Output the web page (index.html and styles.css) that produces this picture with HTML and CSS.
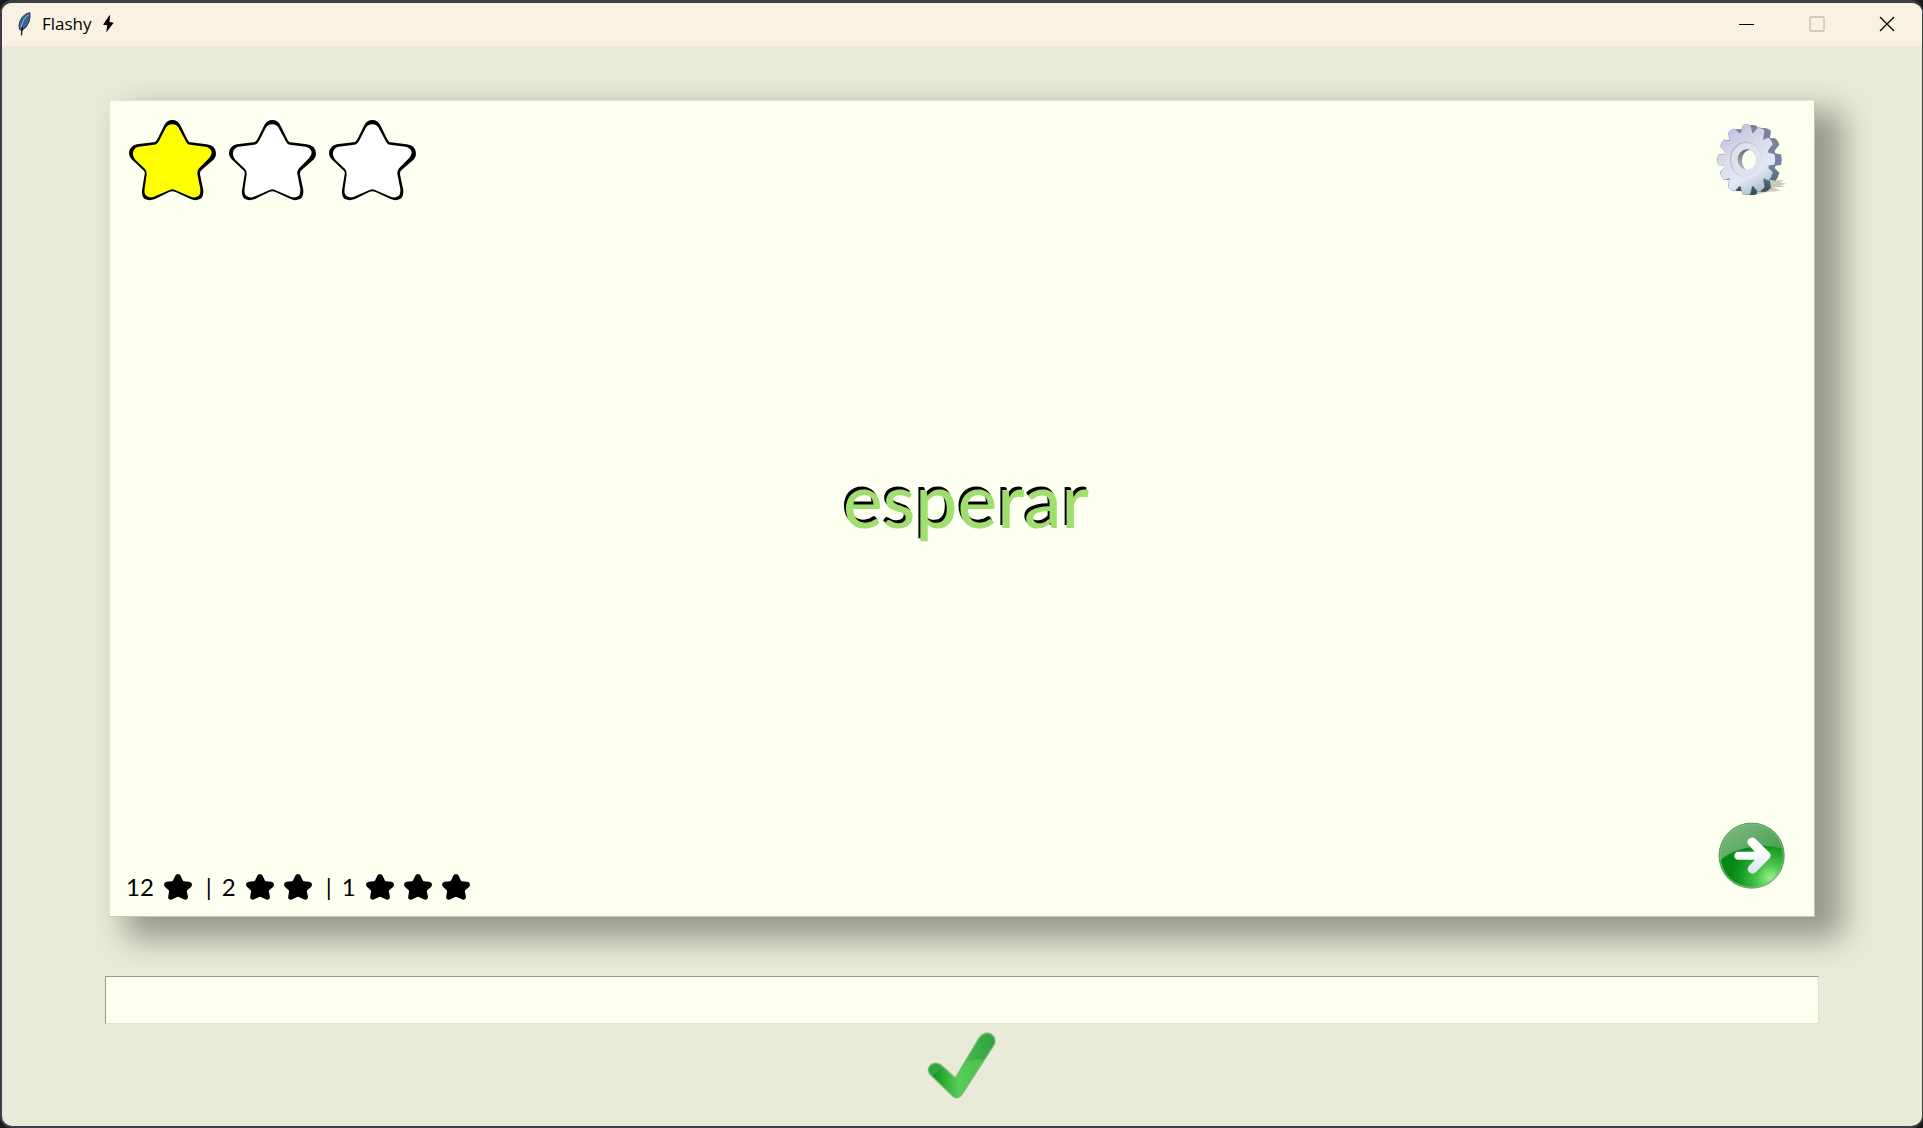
FILE: index.html
```html
<!DOCTYPE html>
<html lang="en">
<head>
<meta charset="utf-8">
<title>Flashy</title>
<link rel="stylesheet" href="styles.css">
</head>
<body>
<svg class="defs" aria-hidden="true">
  <symbol id="star-outline" viewBox="57 59 261 243">
    <path fill="#000" d="M187 59Q204 59 212 76L231 115Q236 126 242 126L290 132Q317 135 318 160Q318 172 306 182L274 210Q269 215 270 222L280 270Q281 290 270 296Q256 303 242 296L195 274Q187 271 179 274L135 296Q118 303 105 296Q94 289 96 270L104 222Q106 215 100 210L68 180Q57 170 57 158Q58 138 80 132L130 126Q137 126 143 115L162 76Q170 59 187 59Z"/>
    <path fill="currentColor" d="M187 72Q201 73 206 83L227 122Q232 133 240 133L286 139Q303 142 305 156Q305 166 297 174L267 204Q261 212 262 220L271 266Q272 281 266 287Q255 294 244 290L195 269Q187 265 179 269L130 290Q116 294 107 285Q102 279 104 264L110 222Q111 212 105 206L76 178Q67 168 69 156Q71 143 86 139L132 133Q141 133 147 122L167 83Q173 73 187 72Z"/>
  </symbol>
  <symbol id="star-solid" viewBox="57 59 261 243">
    <path d="M187 59Q204 59 212 76L231 115Q236 126 242 126L290 132Q317 135 318 160Q318 172 306 182L274 210Q269 215 270 222L280 270Q281 290 270 296Q256 303 242 296L195 274Q187 271 179 274L135 296Q118 303 105 296Q94 289 96 270L104 222Q106 215 100 210L68 180Q57 170 57 158Q58 138 80 132L130 126Q137 126 143 115L162 76Q170 59 187 59Z"/>
  </symbol>
</svg>
<div class="window">
  <header class="titlebar">
    <svg class="feather" viewBox="57 32 38 72" aria-hidden="true">
      <path d="M92 34Q74 36 63 58Q57 72 61 84L67 88Q84 80 90 60Q94 46 92 34Z" fill="#3b6595" stroke="#333a42" stroke-width="3"/>
      <path d="M88 40Q72 50 65 80" fill="none" stroke="#9dbbd6" stroke-width="3"/>
      <path d="M70 76Q68 86 67 102" fill="none" stroke="#111" stroke-width="4"/>
    </svg>
    <h1 class="title">Flashy</h1>
    <svg class="bolt" viewBox="308 45 34 54" aria-hidden="true">
      <path d="M328 45L308 74L321 76L318 98L341 68L328 66L330 46Z"/>
    </svg>
    <div class="controls">
      <button type="button" aria-label="Minimize"><svg viewBox="0 0 16 16"><path d="M0 8.500H15" stroke="#000"/></svg></button>
      <button type="button" aria-label="Maximize" disabled><svg viewBox="0 0 16 16"><rect x="1" y="1" width="14" height="14" rx="1" fill="none" stroke="#c4bdb1" stroke-width="1.300"/></svg></button>
      <button type="button" aria-label="Close"><svg viewBox="0 0 16 16"><path d="M1 1L15 15M15 1L1 15" stroke="#000" stroke-width="1.300"/></svg></button>
    </div>
  </header>
  <main class="content">
    <section class="card">
      <div class="card-top">
        <div class="rating" role="img" aria-label="1 of 3 stars">
          <svg class="filled"><use href="#star-outline"/></svg>
          <svg><use href="#star-outline"/></svg>
          <svg><use href="#star-outline"/></svg>
        </div>
        <button class="icon-button" type="button" aria-label="Settings">
          <svg viewBox="44 63 213 213">
            <defs>
              <linearGradient id="gear-face" x1="0" y1="0" x2=".5" y2="1"><stop offset="0" stop-color="#b8b3dd"/><stop offset=".45" stop-color="#d9dae8"/><stop offset=".8" stop-color="#e0eaf4"/><stop offset="1" stop-color="#b6c6d3"/></linearGradient>
              <linearGradient id="gear-ring" x1="0" y1="0" x2="1" y2="1"><stop offset="0" stop-color="#aaa8c4"/><stop offset="1" stop-color="#f4f6fb"/></linearGradient>
              <linearGradient id="gear-side" gradientUnits="userSpaceOnUse" x1="0" y1="64" x2="0" y2="272"><stop offset="0" stop-color="#84809b"/><stop offset=".6" stop-color="#70839a"/><stop offset="1" stop-color="#304c56"/></linearGradient>
              <linearGradient id="gear-hole" x1="0" y1="0" x2="0" y2="1"><stop offset="0" stop-color="#66646e"/><stop offset="1" stop-color="#c3c7cc"/></linearGradient>
              <clipPath id="gear-shape">
                <ellipse cx="138" cy="167" rx="69" ry="83"/>
                <path id="gear-teeth" d="M122 88L128 64Q138 60 150 65L156 88ZM158 88L173 71Q183 71 192 79L188 108ZM188 108L204 101Q214 109 217 121L200 143ZM200 146L222 150Q226 168 222 182L202 184ZM201 189L217 205Q214 218 206 229L188 222ZM188 224L192 250Q183 260 173 263L158 245ZM155 245L149 270Q138 274 127 270L121 245ZM118 245L103 261Q93 259 84 250L88 223ZM88 222L71 227Q62 217 60 204L77 187ZM76 184L54 182Q50 168 54 153L76 150ZM77 146L61 128Q62 117 71 108L89 112ZM88 109L85 86Q92 76 104 75L118 89Z"/>
              </clipPath>
              <clipPath id="hole-shape"><ellipse cx="140" cy="167" rx="28" ry="31"/></clipPath>
            </defs>
            <path d="M178 242Q210 226 252 229L238 236L260 239L240 244L254 249L218 250L242 260L200 264Q150 278 132 268Z" fill="#b9b8a8" opacity=".75"/>
            <g fill="url(#gear-side)">
              <g transform="translate(20 1)"><ellipse cx="138" cy="167" rx="69" ry="83"/><use href="#gear-teeth"/></g>
              <g transform="translate(15 1)"><ellipse cx="138" cy="167" rx="69" ry="83"/><use href="#gear-teeth"/></g>
              <g transform="translate(10 1)"><ellipse cx="138" cy="167" rx="69" ry="83"/><use href="#gear-teeth"/></g>
              <g transform="translate(5 0)"><ellipse cx="138" cy="167" rx="69" ry="83"/><use href="#gear-teeth"/></g>
            </g>
            <use href="#gear-teeth" fill="none" stroke="#8f93ad" stroke-width="3"/>
            <rect x="50" y="60" width="178" height="214" fill="url(#gear-face)" clip-path="url(#gear-shape)"/>
            <ellipse cx="138" cy="167" rx="47" ry="52" fill="#dfe1ee" stroke="url(#gear-ring)" stroke-width="4"/>
            <g clip-path="url(#hole-shape)">
              <rect x="108" y="130" width="64" height="72" fill="url(#gear-hole)"/>
              <ellipse cx="149" cy="169" rx="24" ry="31" fill="#fdfff0"/>
            </g>
          </svg>
        </button>
      </div>
      <p class="word" lang="es">esperar</p>
      <div class="card-bottom">
        <div class="stats">
          <span>12</span><svg><use href="#star-solid"/></svg>
          <span class="bar">|</span>
          <span>2</span><svg><use href="#star-solid"/></svg><svg><use href="#star-solid"/></svg>
          <span class="bar">|</span>
          <span>1</span><svg><use href="#star-solid"/></svg><svg><use href="#star-solid"/></svg><svg><use href="#star-solid"/></svg>
        </div>
        <button class="icon-button next" type="button" aria-label="Next card">
          <svg viewBox="54 50 204 204">
            <defs>
              <radialGradient id="ball" gradientUnits="userSpaceOnUse" cx="212" cy="218" r="120"><stop offset="0" stop-color="#96f48a"/><stop offset=".35" stop-color="#4bc34b"/><stop offset=".8" stop-color="#109622"/><stop offset="1" stop-color="#078716"/></radialGradient>
              <linearGradient id="gloss" x1="0" y1="0" x2="1" y2="1"><stop offset="0" stop-color="#8bb98d"/><stop offset="1" stop-color="#349d40"/></linearGradient>
              <linearGradient id="arrow" x1="0" y1="0" x2="0" y2="1"><stop offset=".4" stop-color="#fff"/><stop offset="1" stop-color="#d5e4f5"/></linearGradient>
            </defs>
            <circle cx="155" cy="151" r="98" fill="url(#ball)"/>
            <path d="M58 170A98 98 0 1 1 252 133Q205 113 150 126Q80 140 58 170Z" fill="url(#gloss)"/>
            <circle cx="155" cy="151" r="95" fill="none" stroke="#73c37b" stroke-width="3"/>
            <circle cx="155" cy="151" r="98" fill="none" stroke="#5d8b60" stroke-width="2"/>
            <path d="M115 139H164L146 119Q138 109 146 101Q156 92 166 100L210 144Q215 151 210 157L168 200Q158 209 148 201Q139 193 147 182L165 163H115Q103 162 103 151Q103 140 115 139Z" fill="url(#arrow)"/>
          </svg>
        </button>
      </div>
    </section>
    <form class="answer" onsubmit="return false">
      <input class="answer-box" type="text" aria-label="Translation" autocomplete="off">
      <button class="icon-button submit" type="submit" aria-label="Check answer">
        <svg viewBox="50 36 210 204">
          <defs>
            <linearGradient id="tick" gradientUnits="userSpaceOnUse" x1="75" y1="165" x2="190" y2="160"><stop offset="0" stop-color="#149a22"/><stop offset=".6" stop-color="#58cf57"/><stop offset="1" stop-color="#4cc44f"/></linearGradient>
            <linearGradient id="tick-gloss" gradientUnits="userSpaceOnUse" x1="60" y1="0" x2="250" y2="0"><stop offset="0" stop-color="#31a33e"/><stop offset=".6" stop-color="#45b44b"/><stop offset="1" stop-color="#31a440"/></linearGradient>
            <clipPath id="tick-shape"><path d="M68 131Q80 126 92 135L135 174L207 53Q217 38 236 40Q254 46 254 63Q254 69 250 76L153 226Q140 240 127 228L61 165Q52 156 55 144Q58 135 68 131Z"/></clipPath>
          </defs>
          <g clip-path="url(#tick-shape)">
            <rect x="50" y="36" width="210" height="204" fill="url(#tick)"/>
            <path d="M50 36H260V121Q190 112 135 132Q90 145 66 167L50 170Z" fill="url(#tick-gloss)"/>
          </g>
          <path d="M68 131Q80 126 92 135L135 174L207 53Q217 38 236 40Q254 46 254 63Q254 69 250 76L153 226Q140 240 127 228L61 165Q52 156 55 144Q58 135 68 131Z" fill="none" stroke="#7ab87c" stroke-width="4"/>
        </svg>
      </button>
    </form>
  </main>
</div>
</body>
</html>
```
FILE: styles.css
```css
* { box-sizing: border-box; }

body {
  margin: 0;
  min-height: 100vh;
  display: flex;
  background: #1a1a1c;
  color: #000;
  font-family: Lato, "Liberation Sans", sans-serif;
}

.defs {
  position: absolute;
  width: 0;
  height: 0;
}

svg { display: block; }

button {
  padding: 0;
  border: 0;
  background: none;
}

.window {
  flex: 1;
  display: flex;
  flex-direction: column;
  overflow: hidden;
  border: 2px solid #3e3d42;
  border-width: 3px 1px 2px 2px;
  border-radius: 12px;
  background: #e7ebd7;
}

.titlebar {
  display: flex;
  align-items: center;
  height: 43px;
  padding: 0 0 2px 16px;
  background: #f9f2e2;
}

.feather { width: 13px; height: 24px; }

.title {
  margin: 0 11px 0 11px;
  font: 400 17px/24px "Open Sans", sans-serif;
}

.bolt { width: 11px; height: 18px; }

.controls {
  display: flex;
  height: 100%;
  margin-left: auto;
}

.controls button {
  display: grid;
  place-items: center;
  width: 70px;
}

.controls svg { width: 16px; height: 16px; }

.content {
  flex: 1;
  display: flex;
  flex-direction: column;
  padding: 54px 103px 26px;
}

.card {
  flex: 1;
  display: flex;
  flex-direction: column;
  margin: 0 4px 59px;
  padding: 19px 28px 13px 16px;
  border: 1px solid #e2e5d0;
  border-right-color: #c3c6b4;
  border-bottom-color: #c3c6b4;
  background: #fdfff0;
  box-shadow: 22px 16px 30px 5px rgba(0, 0, 0, 0.36);
}

.card-top {
  display: flex;
  justify-content: space-between;
  margin: 0 0 7px 3px;
}

.rating {
  display: flex;
  gap: 13px;
}

.rating svg {
  width: 87px;
  height: 81px;
  color: #fff;
}

.rating .filled { color: #ff0; }

.icon-button svg { width: 70px; height: 68px; overflow: visible; }

.card-top .icon-button svg { width: 71px; height: 71px; }

.word {
  flex: 1;
  display: grid;
  place-items: center;
  margin: 0;
  padding-left: 20px;
  color: #a0de70;
  font-size: 75px;
  font-weight: 500;
  line-height: 96px;
  text-shadow: -2px -3px 0 #000;
}

.card-bottom {
  display: flex;
  align-items: flex-end;
  justify-content: space-between;
  height: 113px;
}

.card-bottom .next { margin-bottom: 13px; }

.card-bottom .next svg { width: 68px; height: 68px; }

.stats {
  display: flex;
  align-items: center;
  font-size: 24px;
  line-height: 32px;
}

.stats svg {
  width: 28px;
  height: 26px;
  margin-left: 10px;
}

.stats .bar {
  width: 26px;
  margin-left: 4px;
  text-align: center;
}

.answer {
  display: flex;
  flex-direction: column;
  align-items: center;
  gap: 8px;
}

.answer-box {
  width: 100%;
  height: 48px;
  padding: 4px 8px;
  border: 1px solid #dfe3cd;
  border-top-color: #969989;
  border-left-color: #969989;
  background: #fdfff0;
  font: 28px Lato, sans-serif;
}
```
